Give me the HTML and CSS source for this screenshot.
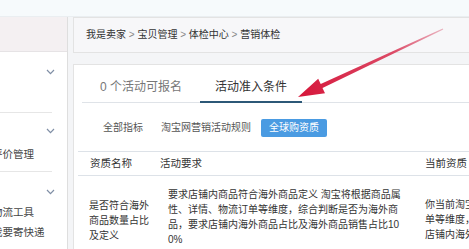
FILE: index.html
```html
<!DOCTYPE html>
<html lang="zh-CN">
<head>
<meta charset="utf-8">
<title>营销体检</title>
<link rel="stylesheet" href="styles.css">
</head>
<body>
<div class="page">
  <div class="topbar"></div>
  <div class="layout">
    <aside class="sidebar">
      <div class="side-head"></div>
      <div class="side-sec sec1">
        <div class="chev-row"><svg class="chev" viewBox="0 0 9 6" width="9" height="6"><polyline points="1,1 4.5,4.6 8,1"/></svg></div>
      </div>
      <div class="side-sec sec2">
        <div class="chev-row"><svg class="chev" viewBox="0 0 9 6" width="9" height="6"><polyline points="1,1 4.5,4.6 8,1"/></svg></div>
        <div class="side-item">评价管理</div>
      </div>
      <div class="side-sec sec3">
        <div class="chev-row"><svg class="chev" viewBox="0 0 9 6" width="9" height="6"><polyline points="1,1 4.5,4.6 8,1"/></svg></div>
        <div class="side-item">物流工具</div>
        <div class="side-item">我要寄快递</div>
      </div>
    </aside>
    <main class="content">
      <div class="crumb">我是卖家 <span class="sep">&gt;</span> 宝贝管理 <span class="sep">&gt;</span> 体检中心 <span class="sep">&gt;</span> 营销体检</div>
      <section class="panel">
        <div class="tabs">
          <div class="tab">0 个活动可报名</div>
          <div class="tab active">活动准入条件</div>
        </div>
        <div class="filters">
          <span class="filter">全部指标</span>
          <span class="filter">淘宝网营销活动规则</span>
          <span class="filter on">全球购资质</span>
        </div>
        <div class="table">
          <div class="thead">
            <div class="c1">资质名称</div>
            <div class="c2">活动要求</div>
            <div class="c3">当前资质</div>
          </div>
          <div class="trow">
            <div class="c1 name">是否符合海外商品数量占比及定义</div>
            <div class="c2 req">要求店铺内商品符合海外商品定义 淘宝将根据商品属<br>性、详情、物流订单等维度，综合判断是否为海外商<br>品，要求店铺内海外商品占比及海外商品销售占比10<br>0%</div>
            <div class="c3 cur">你当前淘宝店铺根据商品属性、详情、物流订<br>单等维度，综合判断是否为海外商品<br>店铺内海外商品占比</div>
          </div>
        </div>
      </section>
    </main>
  </div>
  <svg class="arrow" viewBox="0 0 469 249" width="469" height="249">
    <defs>
      <linearGradient id="ag" gradientUnits="userSpaceOnUse" x1="443" y1="29" x2="300" y2="96">
        <stop offset="0" stop-color="#eab4c0"/>
        <stop offset="0.35" stop-color="#dc4a66"/>
        <stop offset="1" stop-color="#d6173b"/>
      </linearGradient>
    </defs>
    <polygon fill="url(#ag)" points="442.7,28.5 320.7,83.9 318.2,78.7 298,97 325,93.2 322.5,88 443.3,29.6"/>
  </svg>
</div>
</body>
</html>
```

FILE: styles.css
```css
* {
  box-sizing: border-box;
}

body {
  margin: 0;
  font-family: "Liberation Sans", "Noto Sans CJK SC", sans-serif;
  color: #333;
}

.page {
  position: relative;
  width: 469px;
  height: 249px;
  overflow: hidden;
  background: #f4f5f7;
}

.topbar {
  height: 17px;
  background: #f6fafc;
  border-bottom: 1px solid #eaeef1;
}

.layout {
  display: flex;
  height: 232px;
}

.sidebar {
  flex: none;
  width: 68px;
  background: #fff;
  border-right: 1px solid #dedede;
  overflow: hidden;
}

.side-head {
  height: 35px;
  background: #f4f0f2;
  border-bottom: 1px solid #e6e3e5;
}

.side-sec {
  margin-right: 15px;
  border-bottom: 1px solid #e6e6e6;
}

.sec1 {
  height: 61px;
  padding-top: 10px;
}

.sec2 {
  height: 59px;
  padding-top: 8px;
}

.sec3 {
  border-bottom: none;
  padding-top: 10px;
}

.chev-row {
  display: flex;
  justify-content: flex-end;
  align-items: center;
  height: 20px;
  margin-right: -3px;
}

.chev {
  display: block;
  fill: none;
  stroke: #7f8ea5;
  stroke-width: 1.2;
}

.sec2 .chev-row {
  margin-bottom: 3px;
}

.side-item {
  margin-left: -8px;
  height: 20px;
  line-height: 20px;
  font-size: 10.5px;
  color: #444;
  white-space: nowrap;
}

.content {
  flex: 1;
  display: flex;
  flex-direction: column;
  margin-left: 5px;
  margin-right: -10px;
  min-width: 0;
}

.crumb {
  height: 36px;
  line-height: 34px;
  padding-left: 12px;
  font-size: 10px;
  background: #f7f7f9;
  border: 1px solid #e3e3e3;
  white-space: nowrap;
}

.crumb .sep {
  color: #888;
}

.panel {
  flex: 1;
  margin-top: 11px;
  padding-left: 8px;
  background: #fff;
  border: 1px solid #e3e3e3;
  border-bottom: none;
}

.tabs {
  display: flex;
  padding-top: 7px;
  border-bottom: 1px solid #dfe3e8;
  font-size: 12px;
}

.tab {
  width: 118px;
  height: 30px;
  line-height: 30px;
  text-align: center;
  color: #777;
}

.tab.active {
  width: 102px;
  color: #333;
  box-shadow: inset 0 -1px 0 #2c5877, 0 1px 0 #2c5877;
}

.filters {
  display: flex;
  gap: 2px;
  margin-top: 16px;
  margin-left: 13px;
}

.filter {
  height: 18px;
  line-height: 18px;
  padding: 0 8px;
  font-size: 10px;
  color: #555;
  white-space: nowrap;
}

.filter.on {
  background: #4a9be2;
  color: #fff;
  border-radius: 2px;
}

.table {
  margin-top: 14px;
  margin-left: -4px;
}

.thead {
  display: flex;
  height: 25px;
  line-height: 23px;
  font-size: 10.5px;
  border-top: 1px solid #dde2e8;
  border-bottom: 1px solid #dde2e8;
}

.c1 {
  flex: none;
  width: 82px;
  padding-left: 12px;
}

.c2 {
  flex: none;
  width: 265px;
}

.c3 {
  flex: none;
  white-space: nowrap;
}

.trow {
  display: flex;
  font-size: 10px;
  line-height: 15px;
}

.trow .name {
  padding-top: 22px;
  padding-left: 11px;
  padding-right: 10px;
}

.trow .req {
  padding-top: 11px;
  padding-left: 8px;
  white-space: nowrap;
}

.trow .cur {
  padding-top: 21px;
}

.arrow {
  position: absolute;
  top: 0;
  left: 0;
  pointer-events: none;
}
```
